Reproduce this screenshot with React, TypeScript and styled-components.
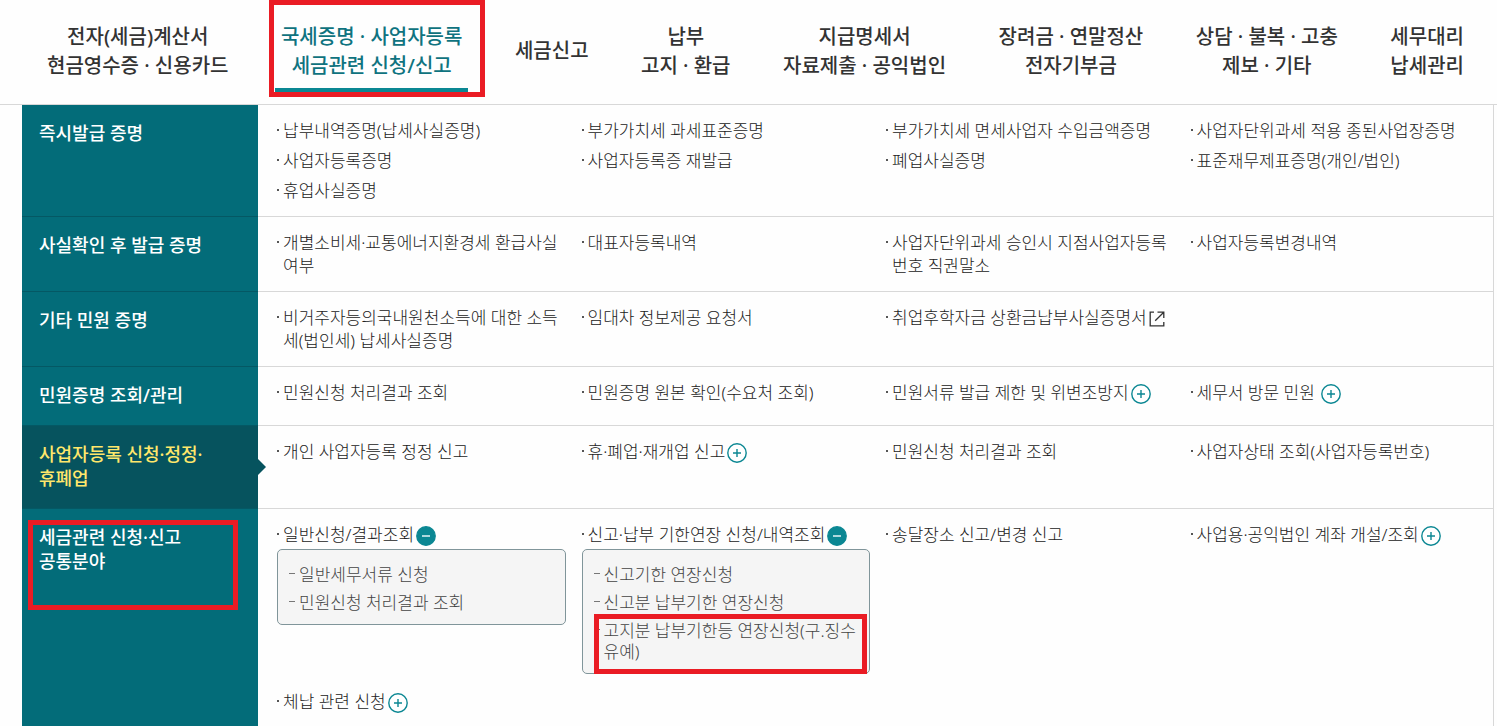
import React from "react";
import styled, { createGlobalStyle, css } from "styled-components";

const color = {
  teal: "#036c79",
  tealDark: "#06535e",
  tealLine: "#045864",
  accent: "#0b8793",
  accentText: "#0f7380",
  yellow: "#ffe76b",
  text: "#222222",
  navText: "#333333",
  subText: "#444444",
  line: "#d8d8d8",
  panel: "#f5f5f5",
  panelLine: "#80959a",
  mark: "#ea1c24",
};

const GlobalStyle = createGlobalStyle`
  * { box-sizing: border-box; }
  body {
    margin: 0;
    background: #fefefe;
    color: ${color.text};
    font-family: "Noto Sans", "Noto Sans CJK KR", sans-serif;
  }
  a { color: inherit; text-decoration: none; }
  ul { margin: 0; padding: 0; list-style: none; }
`;

const Page = styled.div`
  min-height: 100vh;
  display: flex;
  flex-direction: column;
`;

const TopNav = styled.nav`
  border-bottom: 1px solid ${color.line};
`;

const TopList = styled.ul`
  display: flex;
  justify-content: space-between;
  align-items: center;
  height: 104px;
  padding: 0 27px 3px 41px;
`;

const TopItem = styled.li`
  position: relative;
`;

const TopLink = styled.a<{ $active?: boolean }>`
  display: block;
  padding: 0 6px;
  color: ${color.navText};
  font-size: 20px;
  line-height: 29px;
  font-weight: 500;
  text-align: center;
  white-space: nowrap;
  ${(p) =>
    p.$active &&
    css`
      color: ${color.accentText};
      &::after {
        content: "";
        position: absolute;
        left: 0;
        right: 0;
        bottom: -12px;
        height: 4px;
        background: ${color.accent};
      }
    `}
`;

const Mark = styled.span<{ $inset: string; $height?: number }>`
  position: absolute;
  inset: ${(p) => p.$inset};
  height: ${(p) => (p.$height ? `${p.$height}px` : "auto")};
  border: 5px solid ${color.mark};
  pointer-events: none;
`;

const Menu = styled.main`
  flex: 1;
  display: flex;
  flex-direction: column;
  margin: 0 3px 0 22px;
  border-right: 1px solid ${color.line};
`;

const Label = styled.h2<{ $active?: boolean }>`
  position: relative;
  margin: 0;
  padding: 16px 17px 18px;
  background: ${(p) => (p.$active ? color.tealDark : color.teal)};
  color: ${(p) => (p.$active ? color.yellow : "#ffffff")};
  border-bottom: 1px solid ${color.tealLine};
  font-size: 18px;
  line-height: 24px;
  font-weight: 500;
  ${(p) =>
    p.$active &&
    css`
      &::after {
        content: "";
        position: absolute;
        left: 100%;
        top: calc(50% - 8px);
        border: 8px solid transparent;
        border-left-color: ${color.tealDark};
        border-right-width: 0;
      }
    `}
`;

const Items = styled.ul`
  display: grid;
  grid-template-columns: repeat(4, minmax(0, 1fr));
  align-content: start;
  gap: 7px 16px;
  padding: 14px 14px 14px 19px;
  border-bottom: 1px solid ${color.line};
`;

const Row = styled.section`
  display: grid;
  grid-template-columns: 236px minmax(0, 1fr);
  &:last-child {
    flex: 1;
  }
  &:last-child > * {
    border-bottom: 0;
    padding-bottom: 12px;
  }
`;

const Entry = styled.div`
  display: flex;
  font-size: 17px;
  line-height: 23px;
  font-weight: 300;
  white-space: nowrap;
  &::before {
    content: "";
    flex: none;
    width: 2px;
    height: 2px;
    margin: 10px 4px 0 0;
    background: #555555;
  }
`;

const Toggle = styled.button`
  width: 20px;
  height: 20px;
  margin: 3px 0 0 2px;
  padding: 0;
  border: 0;
  background: none;
  vertical-align: top;
  cursor: pointer;
  svg {
    display: block;
  }
`;

const OutIcon = styled.svg`
  margin: 5px 0 0 2px;
  vertical-align: top;
`;

const Panel = styled.ul`
  position: relative;
  display: grid;
  gap: 7px;
  margin: 3px 0 9px;
  padding: 14px 11px 11px;
  border: 1px solid ${color.panelLine};
  border-radius: 5px;
  background: ${color.panel};
`;

const SubEntry = styled.li`
  display: flex;
  color: ${color.subText};
  font-size: 17px;
  line-height: 21px;
  font-weight: 300;
  white-space: nowrap;
  &::before {
    content: "";
    flex: none;
    width: 6px;
    height: 1px;
    margin: 9px 4px 0 0;
    background: #777777;
  }
`;

function ToggleButton({ open, name }: { open: boolean; name: string }) {
  return (
    <Toggle type="button" aria-expanded={open} aria-label={name}>
      <svg width="20" height="20" viewBox="0 0 20 20" fill="none">
        <circle
          cx="10"
          cy="10"
          r="9.2"
          stroke={color.accent}
          strokeWidth="1.4"
          fill={open ? color.accent : "#ffffff"}
        />
        {open ? (
          <path d="M6 10H14" stroke="#d8eef0" strokeWidth="1.6" />
        ) : (
          <path d="M6 10H14M10 6V14" stroke={color.accent} strokeWidth="1.4" />
        )}
      </svg>
    </Toggle>
  );
}

function ExternalIcon() {
  return (
    <OutIcon width="16" height="16" viewBox="0 0 16 16" fill="none" stroke="#333333" strokeWidth="1.3">
      <path d="M5 1.2H1.2V14.8H14.8V11" />
      <path d="M8.5 1.2H14.8V7M14.5 1.5L6.2 9.8" />
    </OutIcon>
  );
}

type Item = {
  lines: string[];
  toggle?: "open" | "closed";
  spaced?: boolean;
  external?: boolean;
  sub?: string[][];
  marked?: boolean;
};

type Group = { label: string[]; active?: boolean; marked?: boolean; items: Item[] };

const topMenu: { lines: string[]; active?: boolean }[] = [
  { lines: ["전자(세금)계산서", "현금영수증 · 신용카드"] },
  { lines: ["국세증명 · 사업자등록", "세금관련 신청/신고"], active: true },
  { lines: ["세금신고"] },
  { lines: ["납부", "고지 · 환급"] },
  { lines: ["지급명세서", "자료제출 · 공익법인"] },
  { lines: ["장려금 · 연말정산", "전자기부금"] },
  { lines: ["상담 · 불복 · 고충", "제보 · 기타"] },
  { lines: ["세무대리", "납세관리"] },
];

const groups: Group[] = [
  {
    label: ["즉시발급 증명"],
    items: [
      { lines: ["납부내역증명(납세사실증명)"] },
      { lines: ["부가가치세 과세표준증명"] },
      { lines: ["부가가치세 면세사업자 수입금액증명"] },
      { lines: ["사업자단위과세 적용 종된사업장증명"] },
      { lines: ["사업자등록증명"] },
      { lines: ["사업자등록증 재발급"] },
      { lines: ["폐업사실증명"] },
      { lines: ["표준재무제표증명(개인/법인)"] },
      { lines: ["휴업사실증명"] },
    ],
  },
  {
    label: ["사실확인 후 발급 증명"],
    items: [
      { lines: ["개별소비세·교통에너지환경세 환급사실", "여부"] },
      { lines: ["대표자등록내역"] },
      { lines: ["사업자단위과세 승인시 지점사업자등록", "번호 직권말소"] },
      { lines: ["사업자등록변경내역"] },
    ],
  },
  {
    label: ["기타 민원 증명"],
    items: [
      { lines: ["비거주자등의국내원천소득에 대한 소득", "세(법인세) 납세사실증명"] },
      { lines: ["임대차 정보제공 요청서"] },
      { lines: ["취업후학자금 상환금납부사실증명서"], external: true },
    ],
  },
  {
    label: ["민원증명 조회/관리"],
    items: [
      { lines: ["민원신청 처리결과 조회"] },
      { lines: ["민원증명 원본 확인(수요처 조회)"] },
      { lines: ["민원서류 발급 제한 및 위변조방지"], toggle: "closed" },
      { lines: ["세무서 방문 민원"], toggle: "closed", spaced: true },
    ],
  },
  {
    label: ["사업자등록 신청·정정·", "휴폐업"],
    active: true,
    items: [
      { lines: ["개인 사업자등록 정정 신고"] },
      { lines: ["휴·폐업·재개업 신고"], toggle: "closed" },
      { lines: ["민원신청 처리결과 조회"] },
      { lines: ["사업자상태 조회(사업자등록번호)"] },
    ],
  },
  {
    label: ["세금관련 신청·신고", "공통분야"],
    marked: true,
    items: [
      {
        lines: ["일반신청/결과조회"],
        toggle: "open",
        sub: [["일반세무서류 신청"], ["민원신청 처리결과 조회"]],
      },
      {
        lines: ["신고·납부 기한연장 신청/내역조회"],
        toggle: "open",
        sub: [["신고기한 연장신청"], ["신고분 납부기한 연장신청"], ["고지분 납부기한등 연장신청(구.징수", "유예)"]],
        marked: true,
      },
      { lines: ["송달장소 신고/변경 신고"] },
      { lines: ["사업용·공익법인 계좌 개설/조회"], toggle: "closed" },
      { lines: ["체납 관련 신청"], toggle: "closed" },
    ],
  },
];

function Lines({ lines }: { lines: string[] }) {
  return (
    <>
      {lines.map((line, i) => (
        <React.Fragment key={line}>
          {i > 0 && <br />}
          {line}
        </React.Fragment>
      ))}
    </>
  );
}

function MenuItem({ item }: { item: Item }) {
  return (
    <li>
      <Entry>
        <div>
          <a href="#">
            <Lines lines={item.lines} />
            {item.external && <ExternalIcon />}
          </a>
          {item.spaced && " "}
          {item.toggle && <ToggleButton open={item.toggle === "open"} name={item.lines[0]} />}
        </div>
      </Entry>
      {item.sub && (
        <Panel>
          {item.sub.map((lines) => (
            <SubEntry key={lines[0]}>
              <a href="#">
                <Lines lines={lines} />
              </a>
            </SubEntry>
          ))}
          {item.marked && <Mark as="li" $inset="auto 2px -1px 11px" $height={60} aria-hidden />}
        </Panel>
      )}
    </li>
  );
}

export default function App() {
  return (
    <Page>
      <GlobalStyle />
      <TopNav>
        <TopList>
          {topMenu.map((m) => (
            <TopItem key={m.lines[0]}>
              <TopLink href="#" $active={m.active}>
                <Lines lines={m.lines} />
              </TopLink>
              {m.active && <Mark $inset="-22px -17px -17px -6px" />}
            </TopItem>
          ))}
        </TopList>
      </TopNav>
      <Menu>
        {groups.map((g) => (
          <Row key={g.label[0]}>
            <Label $active={g.active}>
              <a href="#">
                <Lines lines={g.label} />
              </a>
              {g.marked && <Mark $inset="11px 20px auto 6px" $height={90} />}
            </Label>
            <Items>
              {g.items.map((item) => (
                <MenuItem key={item.lines[0]} item={item} />
              ))}
            </Items>
          </Row>
        ))}
      </Menu>
    </Page>
  );
}
